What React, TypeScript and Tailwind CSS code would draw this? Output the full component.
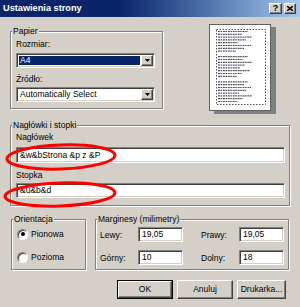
const raised =
  'border border-t-white border-l-white border-r-[#404040] border-b-[#404040] shadow-[inset_-1px_-1px_0_#808080] bg-[#d4d0c8]'
const sunken =
  'border border-t-[#808080] border-l-[#808080] border-r-white border-b-white shadow-[inset_1px_1px_0_#404040,inset_-1px_-1px_0_#d4d0c8] bg-white'
const group =
  'border border-[#808080] shadow-[1px_1px_0_#fff,inset_1px_1px_0_#fff] rounded-none'

const lineWidths = [30, 24, 34, 28, 20, 33, 26, 18, 0, 30, 25, 34, 27, 22, 32, 24, 19, 0, 30, 26, 33, 28, 21, 34, 25, 20]

const PagePreview = () => (
  <div className="ml-[46px] mt-[7px] h-[87px] w-[62px] border border-[#606060] bg-white shadow-[5px_3px_0_#808080]">
    <svg width="60" height="85" viewBox="0 0 60 85">
      <rect x="6.5" y="4.5" width="49" height="75" fill="none" stroke="#505050" strokeWidth="1" strokeDasharray="1.5 1.5" />
      {lineWidths.map((w, i) =>
        w ? (
          <line key={i} x1="8" x2={8 + w} y1={6.5 + i * 2.8} y2={6.5 + i * 2.8} stroke={i % 5 === 2 ? '#4a5a90' : '#505050'} strokeWidth="1.2" strokeDasharray="2 0.6 1.5 0.8" />
        ) : null
      )}
    </svg>
  </div>
)

const Select = ({ value, active }: { value: string; active?: boolean }) => (
  <div className={`${sunken} flex h-[15px] w-[139px] items-stretch p-[1px]`}>
    <div className={`flex flex-1 items-center pl-[1px] ${active ? 'm-[1px] bg-[#0a246a] text-white' : 'pl-[2px]'}`}>{value}</div>
    <div className={`${raised} flex w-[12px] items-center justify-center`}>
      <svg width="5" height="3" viewBox="0 0 5 3">
        <path d="M0 0h5L2.5 3z" fill="#000" />
      </svg>
    </div>
  </div>
)

const Radio = ({ label, checked }: { label: string; checked?: boolean }) => (
  <div className="flex h-[12px] items-center">
    <div className="flex h-[11px] w-[11px] items-center justify-center rounded-full border border-t-[#808080] border-l-[#808080] border-r-white border-b-white bg-white shadow-[inset_1px_1px_0_#404040]">
      {checked && <div className="h-[4px] w-[4px] rounded-full bg-black" />}
    </div>
    <span className="ml-[3px] leading-[10px]">{label}</span>
  </div>
)

const Margin = ({ a, av, b, bv, className }: { a: string; av: string; b: string; bv: string; className: string }) => (
  <div className={`flex items-center ${className}`}>
    <span className="w-[38px] leading-[10px]">{a}</span>
    <div className={`${sunken} flex h-[15px] w-[45px] items-center pl-[3px]`}>{av}</div>
    <span className="ml-[18px] w-[38px] leading-[10px]">{b}</span>
    <div className={`${sunken} flex h-[15px] w-[45px] items-center pl-[3px]`}>{bv}</div>
  </div>
)

export default function App() {
  return (
    <div className="relative flex h-[307px] w-[300px] flex-col overflow-hidden bg-[#d4d0c8] font-['Liberation_Sans',Arial,sans-serif] text-[8.5px] text-black">
      {/* title bar */}
      <div className="flex h-[17px] items-center justify-between bg-gradient-to-r from-[#0a246a] from-40% to-[#a6caf0] pl-[3px] pr-[4px]">
        <span className="text-[9.2px] font-bold leading-none text-white">Ustawienia strony</span>
        <div className="flex gap-[2px]">
          <div className={`${raised} flex h-[11px] w-[13px] items-center justify-center text-[9px] font-bold leading-none`}>?</div>
          <div className={`${raised} flex h-[11px] w-[12px] items-center justify-center`}>
            <svg width="6" height="5" viewBox="0 0 6 5">
              <path d="M0 0L6 5M6 0L0 5" stroke="#000" strokeWidth="1.4" />
            </svg>
          </div>
        </div>
      </div>

      <div className="flex h-[96px]">
        <fieldset className={`${group} ml-[10px] mt-[9px] h-[83px] w-[153px] pl-[5px] pr-[7px]`}>
          <legend className="-ml-[4px] bg-[#d4d0c8] px-[1px] leading-[10px]">Papier</legend>
          <div className="mt-[3px] leading-[10px]">Rozmiar:</div>
          <div className="mt-[4px]">
            <Select value="A4" active />
          </div>
          <div className="mt-[6px] leading-[10px]">Źródło:</div>
          <div className="mt-[3px]">
            <Select value="Automatically Select" />
          </div>
        </fieldset>
        <PagePreview />
      </div>

      <fieldset className={`${group} ml-[10px] mt-[7px] h-[86px] w-[280px] pl-[5px] pr-[4px]`}>
        <legend className="-ml-[4px] bg-[#d4d0c8] px-[1px] leading-[10px]">Nagłówki i stopki</legend>
        <div className="mt-[2px] leading-[10px]">Nagłówek</div>
        <div className={`${sunken} mt-[5px] flex h-[16px] items-center pl-[3px]`}>&amp;w&amp;bStrona &amp;p z &amp;P</div>
        <div className="mt-[7px] leading-[10px]">Stopka</div>
        <div className={`${sunken} mt-[3px] flex h-[15px] items-center pl-[3px]`}>&amp;u&amp;b&amp;d</div>
      </fieldset>

      <div className="mt-[8px] flex">
        <fieldset className={`${group} ml-[11px] h-[56px] w-[75px] pl-[5px]`}>
          <legend className="-ml-[4px] bg-[#d4d0c8] px-[1px] leading-[10px]">Orientacja</legend>
          <div className="mt-[4px]">
            <Radio label="Pionowa" checked />
          </div>
          <div className="mt-[11px]">
            <Radio label="Pozioma" />
          </div>
        </fieldset>
        <fieldset className={`${group} ml-[9px] h-[56px] w-[194px] pl-[4px]`}>
          <legend className="-ml-[3px] bg-[#d4d0c8] px-[1px] leading-[10px]">Marginesy (milimetry)</legend>
          <Margin className="mt-[3px]" a="Lewy:" av="19,05" b="Prawy:" bv="19,05" />
          <Margin className="mt-[8px]" a="Górny:" av="10" b="Dolny:" bv="18" />
        </fieldset>
      </div>

      <div className="mt-[10px] flex pl-[117px]">
        <div className="h-[19px] w-[56px] border border-black">
          <button className={`${raised} h-full w-full leading-none`}>OK</button>
        </div>
        <button className={`${raised} ml-[4px] h-[19px] w-[56px] leading-none`}>Anuluj</button>
        <button className={`${raised} ml-[4px] h-[19px] w-[49px] whitespace-nowrap leading-none`}>Drukarka...</button>
      </div>

      {/* red annotation ellipses */}
      <svg className="pointer-events-none absolute left-0 top-0" width="300" height="307">
        <ellipse cx="61" cy="157" rx="54" ry="12" fill="none" stroke="#ff0000" strokeWidth="3" transform="rotate(-2 61 157)" />
        <ellipse cx="60" cy="194.5" rx="55" ry="11.5" fill="none" stroke="#ff0000" strokeWidth="3" transform="rotate(-2 60 194)" />
      </svg>
    </div>
  )
}
